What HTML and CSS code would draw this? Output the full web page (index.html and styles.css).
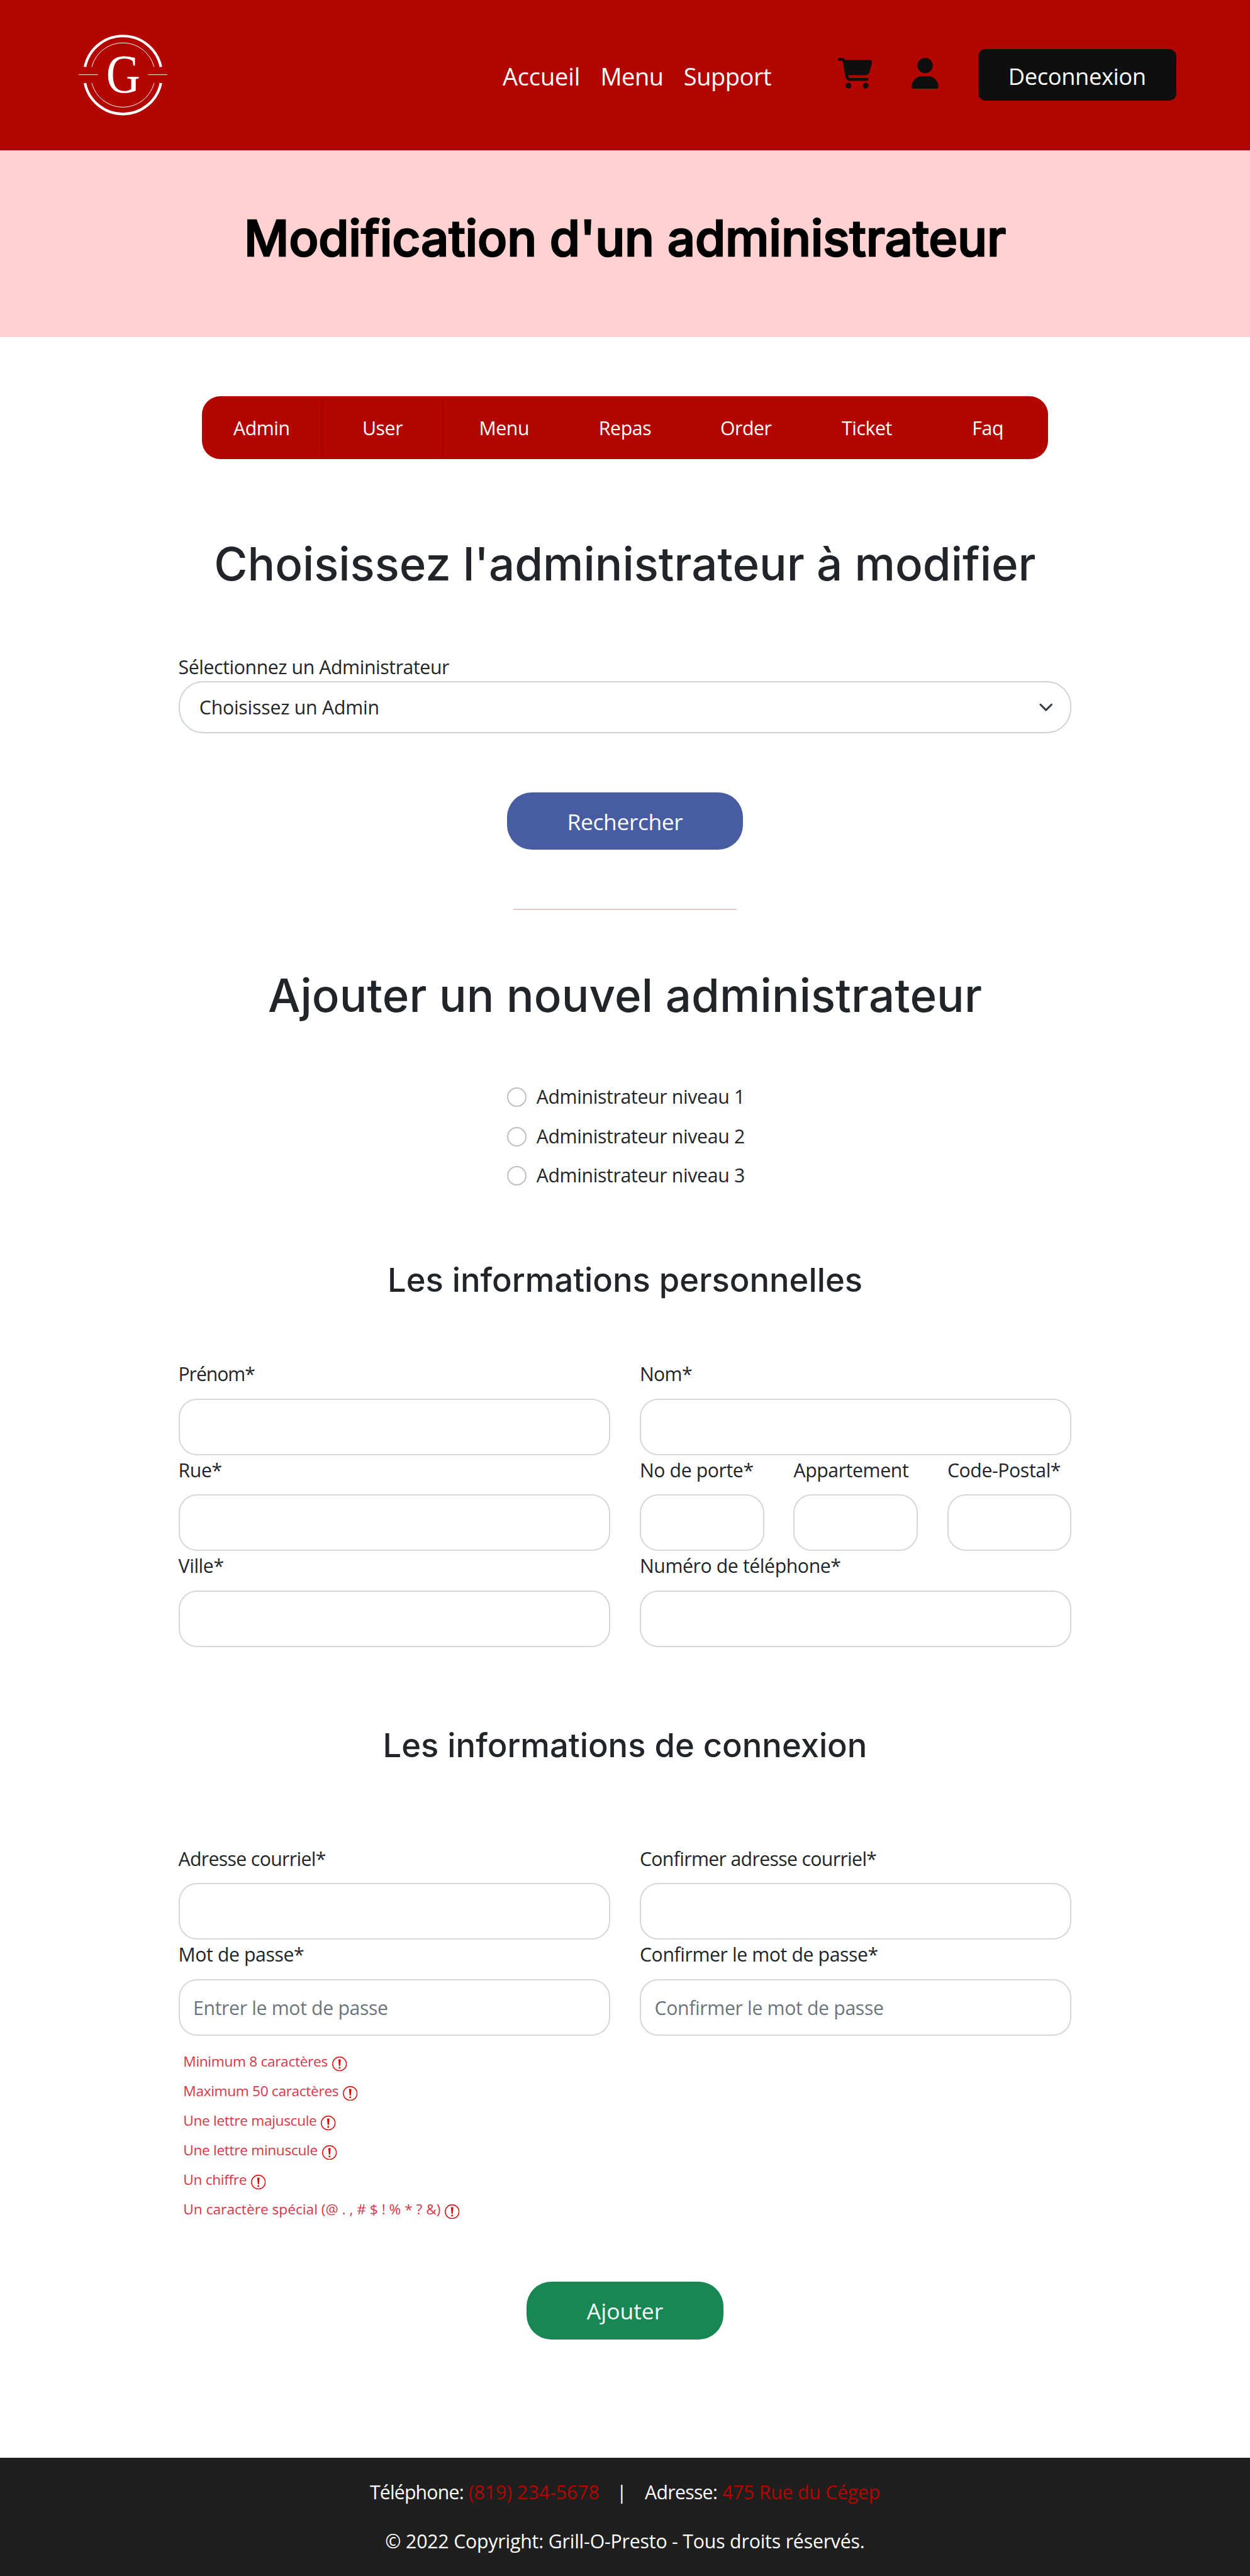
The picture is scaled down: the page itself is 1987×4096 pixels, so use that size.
FILE: index.html
```html
<!DOCTYPE html>
<html lang="fr">
<head>
<meta charset="utf-8">
<title>Modification d'un administrateur</title>
<link rel="stylesheet" href="styles.css">
</head>
<body>
<svg width="0" height="0" class="defs" aria-hidden="true">
  <symbol id="alert" viewBox="0 0 24 24">
    <circle cx="12" cy="12" r="11.2" fill="none" stroke="#e60000" stroke-width="1.5"/>
    <path d="M10.1 5.6c0-.6.5-1 1.100-1h1.600c.6 0 1.100.4 1.100 1l-.9 9.200c0 .4-.4.700-1 .700s-1-.3-1-.700z" fill="#e60000"/>
    <circle cx="12" cy="18.300" r="1.500" fill="#e60000"/>
  </symbol>
</svg>
<header class="header">
  <svg class="logo" viewBox="128 50 144 144">
    <g fill="none" stroke="#fff">
      <path d="M138.300 108.700A63 63 0 0 1 261.700 108.700M138.300 135A63 63 0 0 0 261.700 135" stroke-width="4.300"/>
      <path d="M149.300 108.700A52.400 52.400 0 0 1 250.700 108.700M149.300 135A52.400 52.400 0 0 0 250.700 135" stroke-width="1"/>
      <path d="M128 121.300H159.300M241 121.300H272" stroke-width="1"/>
    </g>
    <text class="logo-letter" transform="translate(200.500 150.500) scale(.87 1)" text-anchor="middle">G</text>
  </svg>
  <nav class="links">
    <a class="accueil">Accueil</a>
    <a class="menu">Menu</a>
    <a class="support">Support</a>
  </nav>
  <svg class="cart" viewBox="0 0 576 512"><path d="M0 24C0 10.700 10.700 0 24 0H69.500c22 0 41.500 12.800 50.600 32h411c26.300 0 45.500 25 38.600 50.400l-41 152.300c-8.500 31.400-37 53.300-69.500 53.300H170.700l5.400 28.500c2.200 11.300 12.100 19.500 23.600 19.500H488c13.300 0 24 10.700 24 24s-10.700 24-24 24H199.700c-34.600 0-64.300-24.600-70.700-58.500L77.400 54.500c-.7-3.800-4-6.500-7.900-6.500H24C10.700 48 0 37.300 0 24zM128 464a48 48 0 1 1 96 0 48 48 0 1 1-96 0zm336-48a48 48 0 1 1 0 96 48 48 0 1 1 0-96z"/></svg>
  <svg class="user" viewBox="0 0 448 512"><path d="M224 256A128 128 0 1 0 224 0a128 128 0 1 0 0 256zm-45.700 48C79.800 304 0 383.800 0 482.300C0 498.700 13.300 512 29.700 512H418.300c16.400 0 29.700-13.300 29.700-29.700C448 383.800 368.200 304 269.700 304H178.300z"/></svg>
  <a class="logout">Deconnexion</a>
</header>
<div class="banner"><h1>Modification d'un administrateur</h1></div>
<nav class="tabs">
  <a>Admin</a><a>User</a><a>Menu</a><a>Repas</a><a>Order</a><a>Ticket</a><a>Faq</a>
</nav>
<main class="content">
  <h2 class="first">Choisissez l'administrateur à modifier</h2>
  <div class="select-field">
    <label>Sélectionnez un Administrateur</label>
    <div class="select"><span>Choisissez un Admin</span>
      <svg viewBox="0 0 16 16"><path d="m2 5 6 6 6-6" fill="none" stroke="#343a40" stroke-width="2" stroke-linecap="round" stroke-linejoin="round"/></svg>
    </div>
  </div>
  <a class="btn search">Rechercher</a>
  <div class="rule"></div>
  <h2 class="second">Ajouter un nouvel administrateur</h2>
  <div class="radios">
    <label><i></i>Administrateur niveau 1</label>
    <label><i></i>Administrateur niveau 2</label>
    <label><i></i>Administrateur niveau 3</label>
  </div>
  <h3 class="personal">Les informations personnelles</h3>
  <div class="form">
    <div class="field"><label class="tightest">Prénom*</label><div class="input"></div></div>
    <div class="field"><label class="tighter">Nom*</label><div class="input"></div></div>
    <div class="field"><label>Rue*</label><div class="input"></div></div>
    <div class="trio">
      <div class="field"><label>No de porte*</label><div class="input"></div></div>
      <div class="field"><label>Appartement</label><div class="input"></div></div>
      <div class="field"><label>Code-Postal*</label><div class="input"></div></div>
    </div>
    <div class="field"><label>Ville*</label><div class="input"></div></div>
    <div class="field"><label>Numéro de téléphone*</label><div class="input"></div></div>
  </div>
  <h3 class="login">Les informations de connexion</h3>
  <div class="form access">
    <div class="field"><label class="tighter">Adresse courriel*</label><div class="input"></div></div>
    <div class="field"><label class="tighter">Confirmer adresse courriel*</label><div class="input"></div></div>
    <div class="field"><label>Mot de passe*</label><div class="input">Entrer le mot de passe</div></div>
    <div class="field"><label>Confirmer le mot de passe*</label><div class="input">Confirmer le mot de passe</div></div>
  </div>
  <ul class="checks">
    <li>Minimum 8 caractères<svg><use href="#alert"/></svg></li>
    <li>Maximum 50 caractères<svg><use href="#alert"/></svg></li>
    <li>Une lettre majuscule<svg><use href="#alert"/></svg></li>
    <li>Une lettre minuscule<svg><use href="#alert"/></svg></li>
    <li>Un chiffre<svg><use href="#alert"/></svg></li>
    <li class="special">Un caractère spécial (@ . , # $ ! % * ? &amp;)<svg><use href="#alert"/></svg></li>
  </ul>
  <a class="btn add">Ajouter</a>
</main>
<footer class="footer">
  <div class="contact"><span class="phone">Téléphone:</span><a>(819) 234-5678</a><b>|</b><span class="address">Adresse:</span><a class="street">475 Rue du Cégep</a></div>
  <div class="copy">© 2022 Copyright: Grill-O-Presto - Tous droits réservés.</div>
</footer>
</body>
</html>
```
FILE: styles.css
```css
* { box-sizing: border-box; }
html { font-size: 9.7792px; }
body {
  margin: 0;
  background: #fff;
  color: #212529;
  font: 3.09rem/4.8rem "Open Sans", "Noto Sans", sans-serif;
  white-space: nowrap;
}
.defs { display: none; }

.header {
  display: flex;
  align-items: center;
  height: 24.4rem;
  padding: 0 12rem 0 12.8rem;
  background: #b30600;
}
.logo { width: 14.4rem; height: 14.4rem; }
.logo-letter { font: 88px "Liberation Serif", serif; fill: #fff; }
.links {
  display: flex;
  gap: 3.3rem;
  width: 54.5rem;
  margin-left: auto;
  padding-top: .4rem;
  color: #fff;
  font-size: 3.88rem;
}
.accueil { letter-spacing: -.011rem; }
.menu { letter-spacing: -.05rem; }
.support { letter-spacing: -.045rem; }
.cart { width: 5.6rem; height: 5rem; margin-right: 6.4rem; margin-top: -.6rem; fill: #0f0f0f; }
.user { width: 4.4rem; height: 5rem; margin-right: 6.4rem; margin-top: -.6rem; fill: #0f0f0f; }
.logout {
  width: 32.2rem;
  height: 8.4rem;
  padding-top: .2rem;
  border-radius: 1.2rem;
  background: #0f0f0f;
  color: #fff;
  font-size: 3.71rem;
  line-height: 8.4rem;
  letter-spacing: -.036rem;
  text-align: center;
}

.banner { height: 30.4rem; padding-top: 9.6rem; background: #ffd1d0; }
h1, h2, h3 { margin: 0; font-family: Inter, sans-serif; font-weight: 500; text-align: center; }
h1 {
  color: #000;
  font-size: 8rem;
  line-height: 9.6rem;
  letter-spacing: -.018rem;
  -webkit-text-stroke: .25rem #000;
}
h2 { font-size: 7.42rem; line-height: 8.9rem; }
h3 { font-size: 5.37rem; line-height: 6.4rem; }

.tabs {
  display: grid;
  grid-template-columns: repeat(7, 1fr);
  width: 137.6rem;
  height: 10.2rem;
  margin: 9.6rem auto 0;
  border-radius: 3rem;
  background: #b30600;
  color: #fff;
  line-height: 10.5rem;
  letter-spacing: -.04rem;
  text-align: center;
  overflow: hidden;
}
.tabs a:nth-child(-n+2) { border-right: 2px solid #a60500; }

.content { display: flex; flex-direction: column; align-items: center; width: 145.2rem; margin: 0 auto; }
.first { margin: 12.7rem 0 9.8rem; }
.select-field { width: 100%; }
label { display: block; height: 4.8rem; line-height: 5rem; letter-spacing: -.04rem; }
label.tighter { letter-spacing: -.066rem; }
label.tightest { letter-spacing: -.11rem; }
.select {
  display: flex;
  align-items: center;
  justify-content: space-between;
  height: 8.4rem;
  padding: 0 2.8rem 0 3.2rem;
  border: 2px solid #ced4da;
  border-radius: 4rem;
  letter-spacing: -.02rem;
}
.select span { padding-top: .2rem; }
.select svg { width: 2.4rem; height: 2.4rem; }
.btn {
  height: 9.4rem;
  border-radius: 4rem;
  color: #fff;
  font-size: 3.62rem;
  line-height: 9.6rem;
  text-align: center;
}
.search { width: 38.4rem; margin-top: 9.6rem; background: #485ca2; letter-spacing: -.04rem; }
.rule { width: 36.4rem; height: 2px; margin-top: 9.6rem; background: #ecc8c3; }
.second { margin: 9.5rem 0 9.6rem; letter-spacing: .013rem; }

.radios { display: flex; flex-direction: column; gap: 1.6rem; }
.radios label { display: flex; align-items: center; gap: 1.6rem; width: 38.4rem; letter-spacing: -.033rem; }
.radios i { flex: none; width: 3.2rem; height: 3.2rem; border: 2px solid #bfbfbf; border-radius: 50%; }

.personal { margin: 11.3rem 0 9.7rem; }
.login { margin: 12.8rem 0; }
.form { display: grid; grid-template-columns: 1fr 1fr; column-gap: 4.8rem; width: 100%; }
.trio { display: grid; grid-template-columns: repeat(3, 1fr); column-gap: 4.8rem; }
.field label { margin-bottom: 1.6rem; }
.input {
  height: 9.2rem;
  padding-left: 2.2rem;
  border: 2px solid #d7d7d7;
  border-radius: 3rem;
  color: #6c757d;
  line-height: 9rem;
  letter-spacing: -.034rem;
}

.checks {
  align-self: flex-start;
  margin: 1.9rem 0 9.3rem;
  padding: 0 0 0 .8rem;
  list-style: none;
  color: #dc3545;
  font-size: 2.32rem;
  line-height: 5rem;
  letter-spacing: -.034rem;
}
.checks li { display: flex; align-items: center; gap: .7rem; height: 4.8rem; }
.checks .special { letter-spacing: 0; }
.checks svg { width: 2.4rem; height: 2.4rem; margin-top: .6rem; }
.add { width: 32rem; margin-bottom: 19.2rem; background: #198754; }

.footer { height: 19.3rem; padding-top: 3.3rem; background: #1f1f1f; color: #fff; text-align: center; }
.contact { display: flex; justify-content: center; margin-bottom: 3.2rem; }
.contact a { margin-left: .8rem; color: #b30600; }
.contact b { margin: 0 2.9rem 0 2.8rem; font-weight: 400; }
.phone { letter-spacing: -.08rem; }
.address { letter-spacing: -.07rem; }
.contact .street { letter-spacing: -.02rem; }
.copy { letter-spacing: -.016rem; }
```
